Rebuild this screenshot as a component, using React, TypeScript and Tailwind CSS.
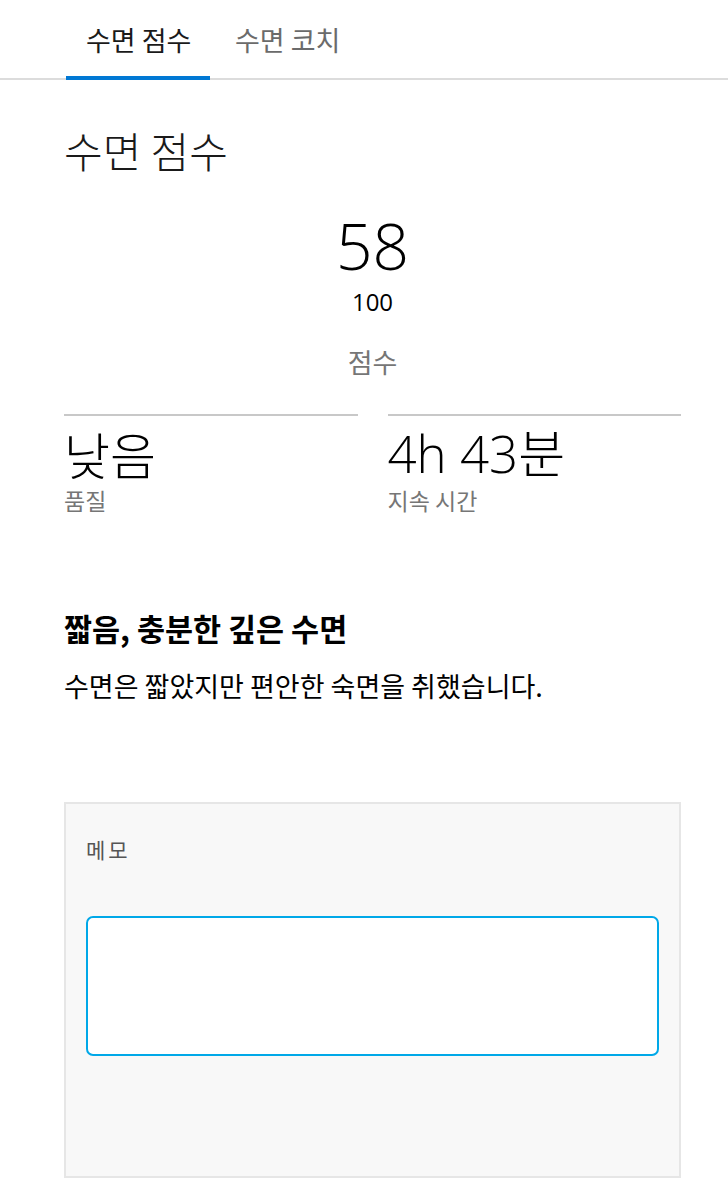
import React from "react";

const kr = { fontFamily: '"Noto Sans CJK KR", sans-serif' };

export default function App() {
  const font = { fontFamily: '"Open Sans", "Noto Sans CJK KR", sans-serif' };
  return (
    <div className="w-[728px] min-h-[1194px] bg-white text-black" style={font}>
      {/* Tabs */}
      <div className="pl-[66px] h-[80px] flex border-b-2 border-[#dcdcdc]">
        <div className="relative w-[144px] pt-[22px] pl-[20px]">
          <span className="text-[27px] leading-[36px] text-[#1a1a1a] whitespace-nowrap" style={kr}>수면 점수</span>
          <div className="absolute left-0 right-0 bottom-[-2px] h-[4px] bg-[#0078d4]" />
        </div>
        <div className="pt-[22px] pl-[25px]">
          <span className="text-[27px] leading-[36px] text-[#6b6b6b] whitespace-nowrap" style={kr}>수면 코치</span>
        </div>
      </div>

      <div className="pl-[64px] pr-[47px]">
        <h1 className="mt-[42px] text-[42px] leading-[56px] font-light text-[#1a1a1a]" style={kr}>수면 점수</h1>

        <div className="flex flex-col items-center mt-[36px]">
          <div className="text-[64px] leading-[64px] font-light">58</div>
          <div className="text-[24px] leading-[28px] mt-[10px]">100</div>
          <div className="text-[27px] leading-[36px] mt-[28px] text-[#767676]" style={kr}>점수</div>
        </div>

        <div className="grid grid-cols-2 gap-[30px] mt-[34px]">
          <div className="border-t-2 border-[#c8c8c8] pt-[12px]">
            <div className="text-[50px] leading-[50px] font-light" style={kr}>낮음</div>
            <div className="text-[23px] leading-[30px] mt-[7px] text-[#767676]" style={kr}>품질</div>
          </div>
          <div className="border-t-2 border-[#c8c8c8] pt-[12px]">
            <div className="text-[51px] leading-[50px] font-light whitespace-nowrap">4h 43분</div>
            <div className="text-[23px] leading-[30px] mt-[7px] text-[#767676]" style={kr}>지속 시간</div>
          </div>
        </div>

        <div className="mt-[93px] text-[30.5px] leading-[40px] font-bold whitespace-nowrap" style={kr}>짧음, 충분한 깊은 수면</div>
        <div className="mt-[20px] text-[27px] leading-[36px] whitespace-nowrap" style={kr}>수면은 짧았지만 편안한 숙면을 취했습니다.</div>

        <div className="mt-[98px] bg-[#f8f8f8] border-2 border-[#e6e6e6] h-[376px] px-[20px] pt-[30px]">
          <div className="text-[21px] leading-[30px] tracking-[3px] text-[#555]" style={kr}>메모</div>
          <div className="mt-[52px] h-[140px] bg-white border-2 border-[#00a8e8] rounded-[7px]" />
        </div>
      </div>
    </div>
  );
}
